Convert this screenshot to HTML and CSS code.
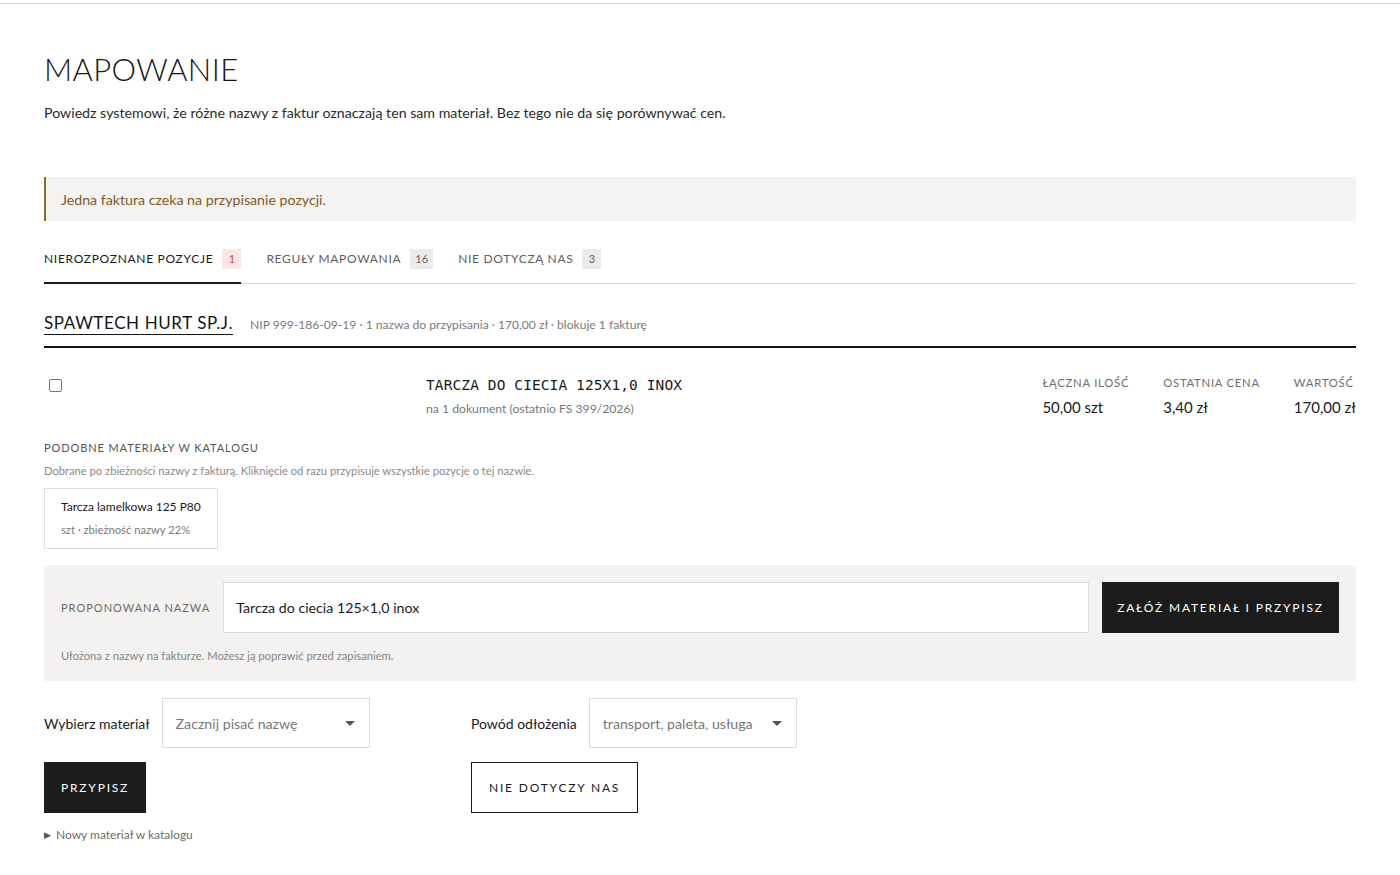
FILE: index.html
```html
<!DOCTYPE html>
<html lang="pl">
<head>
<meta charset="utf-8">
<title>Mapowanie</title>
<link rel="stylesheet" href="styles.css">
</head>
<body>
<div class="topbar"></div>
<main class="page">
  <h1 class="title">MAPOWANIE</h1>
  <p class="lead">Powiedz systemowi, że różne nazwy z faktur oznaczają ten sam materiał. Bez tego nie da się porównywać cen.</p>

  <div class="alert">Jedna faktura czeka na przypisanie pozycji.</div>

  <nav class="tabs">
    <a class="tab active">NIEROZPOZNANE POZYCJE <span class="badge red">1</span></a>
    <a class="tab">REGUŁY MAPOWANIA <span class="badge">16</span></a>
    <a class="tab">NIE DOTYCZĄ NAS <span class="badge">3</span></a>
  </nav>

  <header class="supplier">
    <span class="supplier-name">SPAWTECH HURT SP.J.</span>
    <span class="supplier-meta">NIP 999-186-09-19 · 1 nazwa do przypisania · 170,00 zł · blokuje 1 fakturę</span>
  </header>

  <section class="item">
    <div class="check-col"><span class="checkbox"></span></div>
    <div class="item-main">
      <div class="item-name">TARCZA DO CIECIA 125X1,0 INOX</div>
      <div class="item-sub">na 1 dokument (ostatnio FS 399/2026)</div>
    </div>
    <div class="stats">
      <div class="stat"><div class="stat-label">ŁĄCZNA ILOŚĆ</div><div class="stat-value">50,00 szt</div></div>
      <div class="stat"><div class="stat-label">OSTATNIA CENA</div><div class="stat-value">3,40 zł</div></div>
      <div class="stat"><div class="stat-label">WARTOŚĆ</div><div class="stat-value">170,00 zł</div></div>
    </div>
  </section>

  <section class="similar">
    <div class="section-label">PODOBNE MATERIAŁY W KATALOGU</div>
    <div class="section-desc">Dobrane po zbieżności nazwy z fakturą. Kliknięcie od razu przypisuje wszystkie pozycje o tej nazwie.</div>
    <div class="cards">
      <div class="card">
        <div class="card-name">Tarcza lamelkowa 125 P80</div>
        <div class="card-sub">szt · zbieżność nazwy 22%</div>
      </div>
    </div>
  </section>

  <section class="propose">
    <div class="propose-row">
      <span class="propose-label">PROPONOWANA NAZWA</span>
      <div class="input">Tarcza do ciecia 125×1,0 inox</div>
      <button class="btn btn-dark btn-wide">ZAŁÓŻ MATERIAŁ I PRZYPISZ</button>
    </div>
    <div class="propose-help">Ułożona z nazwy na fakturze. Możesz ją poprawić przed zapisaniem.</div>
  </section>

  <section class="actions">
    <div class="action-col">
      <div class="field">
        <span class="field-label">Wybierz materiał</span>
        <div class="select select-a"><span>Zacznij pisać nazwę</span><span class="caret"></span></div>
      </div>
      <button class="btn btn-dark">PRZYPISZ</button>
      <div class="disclosure"><span class="tri">▶</span> Nowy materiał w katalogu</div>
    </div>
    <div class="action-col">
      <div class="field">
        <span class="field-label">Powód odłożenia</span>
        <div class="select select-b"><span>transport, paleta, usługa</span><span class="caret"></span></div>
      </div>
      <button class="btn btn-outline">NIE DOTYCZY NAS</button>
    </div>
  </section>
</main>
</body>
</html>
```

FILE: styles.css
```css
* { box-sizing: border-box; }
html, body { margin: 0; padding: 0; background: #fff; }
body {
  font-family: "Lato", "Noto Sans", sans-serif;
  color: #1d1d1d;
  font-size: 14.2px;
}
.topbar {
  height: 4px;
  border-bottom: 1px solid #dcdcdc;
}
.page {
  padding: 0 44px;
}
.title {
  margin: 45px 0 0;
  font-weight: 300;
  font-size: 31px;
  letter-spacing: 0.4px;
  line-height: 40px;
  color: #151515;
}
.lead {
  margin: 13px 0 0;
  font-size: 14.2px;
  line-height: 22px;
  color: #2a2a2a;
}
.alert {
  margin-top: 53px;
  height: 44px;
  display: flex;
  align-items: center;
  padding-left: 15px;
  background: #f4f3f1;
  border-left: 2px solid #8f6a2c;
  color: #80591d;
  font-size: 14.2px;
}
.tabs {
  display: flex;
  gap: 25px;
  border-bottom: 1px solid #dcdcdc;
}
.tab {
  display: flex;
  align-items: center;
  gap: 9px;
  height: 63px;
  padding-top: 14px;
  font-size: 12px;
  letter-spacing: 0.7px;
  color: #5d5d5d;
  border-bottom: 2px solid transparent;
  margin-bottom: -1px;
}
.tab.active {
  color: #1a1a1a;
  border-bottom-color: #1a1a1a;
}
.badge {
  display: inline-flex;
  align-items: center;
  justify-content: center;
  min-width: 19px;
  height: 20px;
  padding: 0 5px;
  background: #ebebea;
  color: #666;
  font-size: 11px;
  letter-spacing: 0;
}
.badge.red {
  background: #fbe6e6;
  color: #c94a4a;
}
.supplier {
  display: flex;
  align-items: baseline;
  gap: 17px;
  padding-top: 28px;
  padding-bottom: 13px;
  border-bottom: 2px solid #151515;
}
.supplier-name {
  font-size: 17px;
  letter-spacing: 0.6px;
  color: #151515;
  text-decoration: underline;
  text-underline-offset: 5px;
  text-decoration-thickness: 1px;
}
.supplier-meta {
  font-size: 12.1px;
  color: #7a7a7a;
}
.item {
  display: grid;
  grid-template-columns: 382px 1fr auto;
  padding-top: 25px;
}
.check-col { padding: 6px 0 0 5px; }
.checkbox {
  display: block;
  width: 13px;
  height: 13px;
  border: 1px solid #767676;
  border-radius: 2px;
  background: #fff;
}
.item-name {
  font-family: "DejaVu Sans Mono", "Liberation Mono", monospace;
  font-size: 14.5px;
  letter-spacing: 0.1px;
  line-height: 24px;
  color: #1a1a1a;
}
.item-sub {
  margin-top: 2px;
  font-size: 12.2px;
  color: #777;
  line-height: 20px;
}
.stats {
  display: flex;
  gap: 34px;
  padding-top: 2px;
}
.stat-label {
  font-size: 11.3px;
  letter-spacing: 0.75px;
  color: #6d6d6d;
  line-height: 16px;
}
.stat-value {
  margin-top: 6px;
  font-size: 15px;
  line-height: 20px;
  color: #1a1a1a;
}
.similar { margin-top: 21px; }
.section-label {
  font-size: 11px;
  letter-spacing: 0.9px;
  color: #555;
  line-height: 16px;
}
.section-desc {
  margin-top: 7px;
  font-size: 11.2px;
  color: #8a8a8a;
  line-height: 16px;
}
.cards {
  margin-top: 9px;
  display: flex;
}
.card {
  border: 1px solid #dedede;
  padding: 9px 16px 10px;
  height: 61px;
}
.card-name {
  font-size: 12px;
  color: #1a1a1a;
  line-height: 18px;
}
.card-sub {
  margin-top: 6px;
  font-size: 11.2px;
  color: #7a7a7a;
  line-height: 16px;
}
.propose {
  margin-top: 16px;
  background: #f3f2f0;
  padding: 17px 17px 17px;
}
.propose-row {
  display: flex;
  align-items: center;
  gap: 13px;
}
.propose-label {
  font-size: 11px;
  letter-spacing: 1px;
  color: #6a6a6a;
  white-space: nowrap;
  margin-right: 0;
}
.input {
  flex: 1;
  height: 51px;
  background: #fff;
  border: 1px solid #dcdcdc;
  display: flex;
  align-items: center;
  padding-left: 12px;
  font-size: 14.2px;
  color: #1a1a1a;
}
.btn {
  font-family: inherit;
  height: 51px;
  border: none;
  font-size: 12px;
  letter-spacing: 1.8px;
  cursor: pointer;
  padding: 0 17px;
  white-space: nowrap;
}
.btn-dark {
  background: #1c1c1c;
  color: #fff;
}
.btn-wide { width: 237px; padding: 0; }
.btn-outline {
  background: #fff;
  color: #1a1a1a;
  border: 1px solid #1a1a1a;
}
.propose-help {
  margin-top: 15px;
  font-size: 11.2px;
  color: #858585;
  line-height: 16px;
}
.actions {
  display: grid;
  grid-template-columns: 427px auto;
  margin-top: 17px;
}
.action-col {
  display: flex;
  flex-direction: column;
  align-items: flex-start;
  gap: 14px;
}
.field {
  display: flex;
  align-items: center;
  gap: 12px;
}
.field-label {
  font-size: 14px;
  color: #1a1a1a;
}
.select {
  height: 50px;
  border: 1px solid #dcdcdc;
  display: flex;
  align-items: center;
  justify-content: space-between;
  padding: 0 14px 0 13px;
  font-size: 14.2px;
  color: #777;
}
.select-a { width: 208px; }
.select-b { width: 208px; }
.caret {
  width: 0;
  height: 0;
  border-left: 5px solid transparent;
  border-right: 5px solid transparent;
  border-top: 5px solid #555;
}
.disclosure {
  margin-top: 0;
  font-size: 12px;
  color: #6d6d6d;
  display: flex;
  align-items: center;
  gap: 5px;
}
.tri {
  font-size: 9px;
  color: #555;
}
```
